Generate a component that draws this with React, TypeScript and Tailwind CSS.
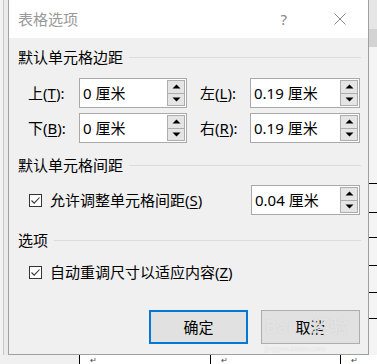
import React from "react";

const Key = ({ label, k }: { label: string; k: string }) => (
  <span>
    {label}(<span className="underline underline-offset-2">{k}</span>):
  </span>
);

const Arrow = ({ up }: { up?: boolean }) => (
  <svg width="9" height="5" viewBox="0 0 9 5">
    {up ? <path d="M0.5 4.5 L4.5 0.5 L8.5 4.5 Z" fill="#000" /> : <path d="M0.5 0.5 L4.5 4.5 L8.5 0.5 Z" fill="#000" />}
  </svg>
);

const SpinBox = ({ value, width }: { value: string; width: string }) => (
  <div className={`${width} h-[30px] flex border border-[#a9a9a9] bg-white`}>
    <div className="flex-1 flex items-center pl-[3px] text-[15px] leading-[20px] text-black">{value}</div>
    <div className="w-[19px] flex flex-col py-px pr-px">
      <div className="h-[14px] flex items-center justify-center bg-[#e5e5e5] border border-[#adadad]">
        <Arrow up />
      </div>
      <div className="h-[13px] flex items-center justify-center bg-[#e5e5e5] border border-[#adadad] border-t-0">
        <Arrow />
      </div>
    </div>
  </div>
);

const SectionTitle = ({ title }: { title: string }) => (
  <div className="flex items-center h-[20px]">
    <span className="text-[15px] leading-[20px] text-black">{title}</span>
    <div className="flex-1 ml-[6px] mr-[-1px] border-t border-[#dcdcdc]" />
  </div>
);

const CheckBox = () => (
  <div className="w-[13px] h-[13px] border border-[#333] bg-white flex items-center justify-center">
    <svg width="11" height="11" viewBox="0 0 11 11">
      <path d="M1.5 5.5 L4.2 8.2 L9.5 2.5" fill="none" stroke="#333" strokeWidth="1.1" />
    </svg>
  </div>
);

export default function App() {
  return (
    <div className="w-[377px] h-[364px] overflow-hidden flex flex-col bg-white font-['Noto_Sans','Noto_Sans_CJK_SC',sans-serif]">
      <div className="flex h-[355px]">
        {/* left edge of the window behind */}
        <div className="w-[8px] flex bg-[#ebebeb]">
          <div className="w-[3px] bg-[#f2f2f2]" />
          <div className="w-px bg-[#c8c8c8]" />
        </div>

        {/* dialog */}
        <div className="w-[361px] flex flex-col border-x border-b border-[#a0a0a0] bg-[#f0f0f0]">
          <div className="h-[38px] bg-white flex items-center pl-[9px] pr-[22px]">
            <span className="text-[15px] leading-[20px] text-[#999]">表格选项</span>
            <span className="ml-auto text-[15px] leading-[20px] text-[#888]">?</span>
            <svg className="ml-[47px]" width="12" height="12" viewBox="0 0 12 12">
              <path d="M0.5 0.5 L11.5 11.5 M11.5 0.5 L0.5 11.5" stroke="#888" strokeWidth="1" />
            </svg>
          </div>

          <div className="flex-1 flex flex-col pl-[9px] pr-[8px] pt-[9px] text-[15px] leading-[20px] text-black">
            <SectionTitle title="默认单元格边距" />

            <div className="flex items-center mt-[11px]">
              <div className="ml-[10px] w-[51px]">
                <Key label="上" k="T" />
              </div>
              <SpinBox value="0 厘米" width="w-[108px]" />
              <div className="ml-[13px] w-[50px]">
                <Key label="左" k="L" />
              </div>
              <SpinBox value="0.19 厘米" width="w-[110px]" />
            </div>
            <div className="flex items-center mt-[5px]">
              <div className="ml-[10px] w-[51px]">
                <Key label="下" k="B" />
              </div>
              <SpinBox value="0 厘米" width="w-[108px]" />
              <div className="ml-[13px] w-[50px]">
                <Key label="右" k="R" />
              </div>
              <SpinBox value="0.19 厘米" width="w-[110px]" />
            </div>

            <div className="mt-[12px]">
              <SectionTitle title="默认单元格间距" />
            </div>
            <div className="flex items-center mt-[10px]">
              <div className="ml-[11px]">
                <CheckBox />
              </div>
              <span className="ml-[8px]">
                允许调整单元格间距(<span className="underline underline-offset-2">S</span>)
              </span>
              <div className="ml-auto">
                <SpinBox value="0.04 厘米" width="w-[109px]" />
              </div>
            </div>

            <div className="mt-[15px]">
              <SectionTitle title="选项" />
            </div>
            <div className="flex items-center h-[20px] mt-[12px]">
              <div className="ml-[11px]">
                <CheckBox />
              </div>
              <span className="ml-[8px]">
                自动重调尺寸以适应内容(<span className="underline underline-offset-2">Z</span>)
              </span>
            </div>

            <div className="flex justify-end gap-[13px] mt-[28px]">
              <button className="w-[99px] h-[34px] bg-[#e1e1e1] border-2 border-[#0078d7] text-[15px] text-black">
                确定
              </button>
              <div className="relative">
                <button className="w-[99px] h-[34px] bg-[#e1e1e1] border border-[#adadad] text-[15px] text-black">
                  取消
                </button>
                {/* watermark over the cancel button */}
                <span className="absolute left-[4px] top-[5px] text-[18px] font-bold leading-[22px] text-white/50 [text-shadow:0_0_1px_#c4c4c4] pointer-events-none">
                  Bai&nbsp;&nbsp;&nbsp;&nbsp;经验
                </span>
                <span className="absolute left-[4px] top-[35px] text-[7px] leading-[7px] text-white/70 [text-shadow:0_0_1px_#c8c8c8] pointer-events-none">
                  jingyan.baidu.com
                </span>
              </div>
            </div>
          </div>
        </div>

        {/* right edge: document behind */}
        <div className="w-[8px] flex flex-col bg-[#f4f4f4]">
          <div className="h-[29px] bg-[#e6e6e6]" />
          <div className="h-[18px] bg-[#d3d3d3]" />
          <div className="h-[136px]" />
          <div className="h-[29px] border-t border-black" />
          <div className="h-[25px] border-t border-black" />
          <div className="h-[28px] border-t border-black" />
          <div className="h-[27px] border-t border-black" />
          <div className="h-[26px] border-t border-black" />
          <div className="h-[26px] border-t border-black" />
        </div>
      </div>

      {/* document table below the dialog */}
      <div className="h-[9px] flex text-[#444] text-[8px] leading-[8px]">
        <div className="w-[79px] bg-[#f0f0f0]" />
        <div className="w-[131px] border-l border-black pl-[10px] pt-px">↵</div>
        <div className="w-[130px] border-l border-black pl-[10px] pt-px">↵</div>
        <div className="flex-1 border-l border-black pl-[10px] pt-px">↵</div>
      </div>
    </div>
  );
}
